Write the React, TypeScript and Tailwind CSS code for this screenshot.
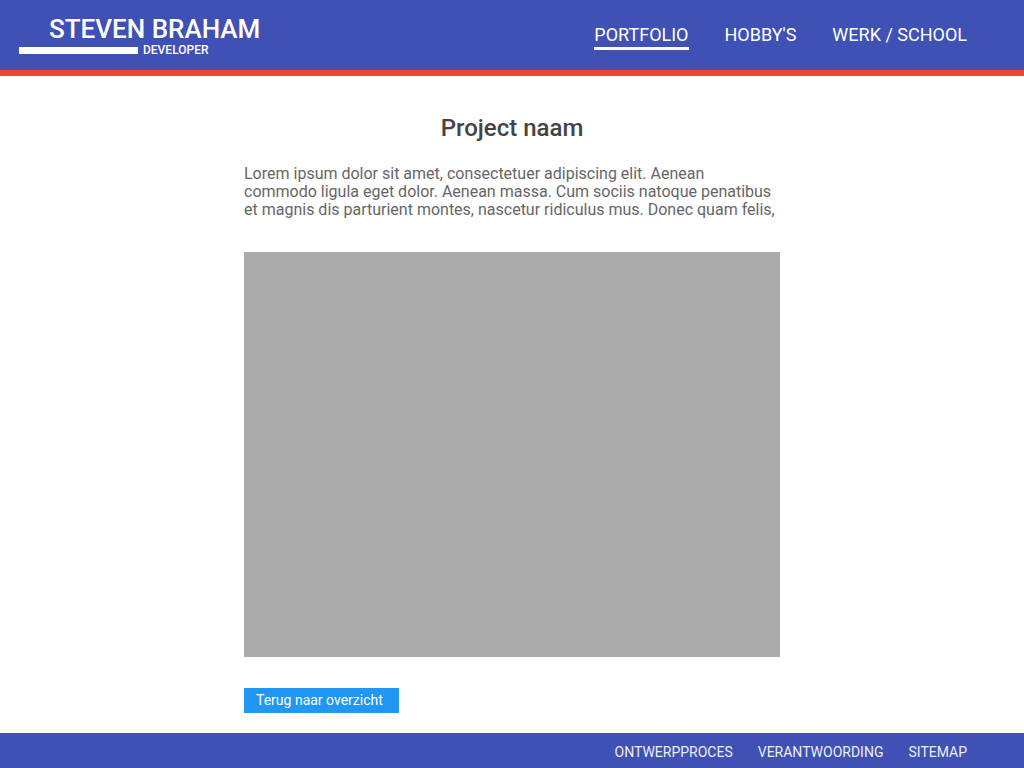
import React from 'react'

const navItems = ['PORTFOLIO', "HOBBY'S", 'WERK / SCHOOL']
const footerItems = ['ONTWERPPROCES', 'VERANTWOORDING', 'SITEMAP']

export default function App() {
	return (
		<div className="flex min-h-[768px] flex-col bg-white font-['Roboto',sans-serif]">
			{/* Header */}
			<header className="border-b-[6px] border-[#f44336] bg-[#3f51b5]">
				<div className="flex h-[70px] items-center justify-between pl-[19px] pr-[57px]">
					<div className="flex flex-col pt-[2px]">
						<h1 className="ml-[30px] text-[26px] leading-[28px] font-medium text-white">
							STEVEN BRAHAM
						</h1>
						<div className="flex items-center gap-[5px]">
							<span className="h-[7px] w-[119px] bg-white" />
							<span className="text-[12px] leading-[14px] font-medium text-white">DEVELOPER</span>
						</div>
					</div>
					<nav className="flex items-center gap-[36px] pt-[3px]">
						{navItems.map((item, i) => (
							<a
								key={item}
								href="#"
								className={
									i === 0
										? 'border-b-[3px] border-white text-[18px] leading-[24px] text-white'
										: 'border-b-[3px] border-transparent text-[18px] leading-[24px] text-white'
								}
							>
								{item}
							</a>
						))}
					</nav>
				</div>
			</header>

			{/* Content */}
			<main className="mx-auto flex w-[536px] flex-1 flex-col pt-[37px] pb-[20px]">
				<h2 className="text-center text-[24px] leading-[30px] font-medium text-[#444]">Project naam</h2>
				<p className="mt-[22px] text-[16px] leading-[18px] text-[#666]">
					Lorem ipsum dolor sit amet, consectetuer adipiscing elit. Aenean
					<br />
					commodo ligula eget dolor. Aenean massa. Cum sociis natoque penatibus
					<br />
					et magnis dis parturient montes, nascetur ridiculus mus. Donec quam felis,
				</p>
				<div className="mt-[33px] h-[405px] w-full bg-[#ababab]" />
				<div className="mt-[31px]">
					<button className="h-[25px] w-[155px] bg-[#2196f3] pl-[12px] text-left text-[14px] text-white">
						Terug naar overzicht
					</button>
				</div>
			</main>

			{/* Footer */}
			<footer className="flex h-[35px] items-center justify-end gap-[25px] bg-[#3f51b5] pt-[3px] pr-[57px]">
				{footerItems.map((item) => (
					<a key={item} href="#" className="text-[14px] text-[#eeeeee]">
						{item}
					</a>
				))}
			</footer>
		</div>
	)
}
